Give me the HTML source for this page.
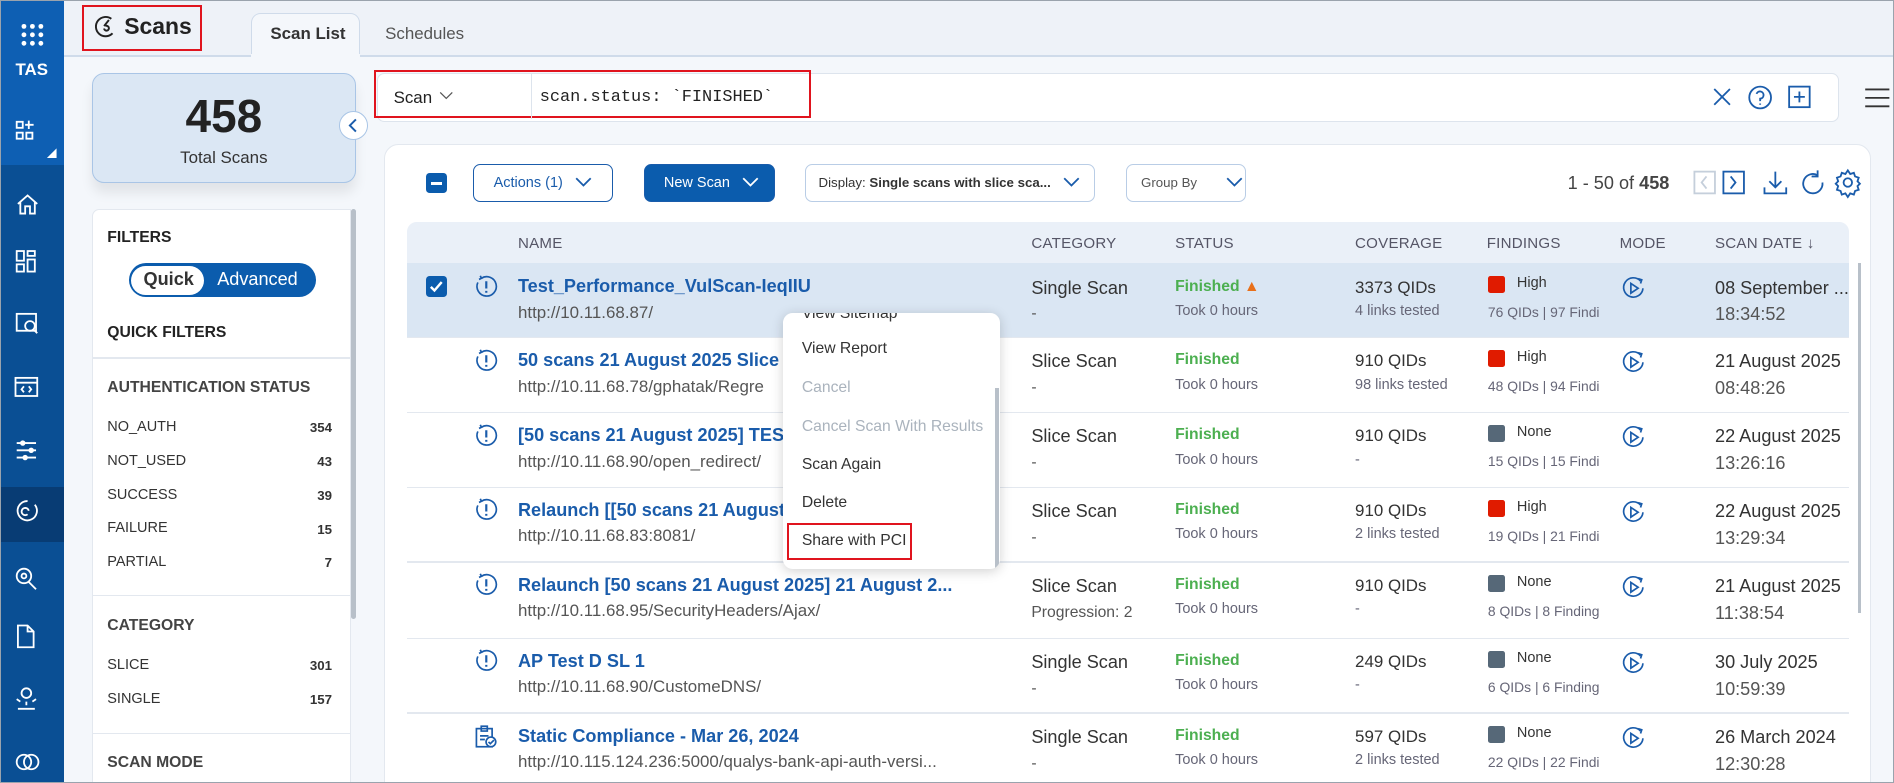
<!DOCTYPE html>
<html><head><meta charset="utf-8"><style>
*{box-sizing:border-box;margin:0;padding:0}
html,body{width:1894px;height:783px;overflow:hidden;background:#fff}
#r{zoom:1.2079;width:1568px;height:648px;position:relative;background:#eef2f8;font-family:"Liberation Sans",sans-serif;color:#333;overflow:hidden;border:1px solid #9aa3ad}
.a{position:absolute}
.sb{left:0;top:0;width:52px;height:648px;background:#0a4f94}
.t{white-space:nowrap}
.nm{color:#1a5cab;font-weight:bold;font-size:15px}
.url{color:#555;font-size:14px}
.cat{font-size:15px;color:#333}
.fin{color:#4caf50;font-weight:bold;font-size:13px}
.sm{font-size:12px;color:#667}
.hd{font-size:12.5px;color:#556;letter-spacing:.2px}
.sev{width:14px;height:14px;border-radius:2px}
.mi{left:16px;font-size:13px;color:#333}
.fl{font-size:12px;color:#333;left:13px}
.fn{font-size:11px;font-weight:bold;right:16px;color:#333}
.btn{border:1px solid #1a5cab;border-radius:6px;height:31px;top:135px;font-size:12px;color:#1a5cab;display:flex;align-items:center;padding-left:16px}
</style></head><body><div id="r">
<div class="a sb"></div>
<div class="a" style="left:0;top:0;width:52px;height:136px;background:#0e5fb3"></div>
<div class="a" style="left:0;top:402px;width:52px;height:46px;background:#083c74"></div>
<svg class="a" style="left:0;top:0" width="52" height="648" fill="none" stroke="#fff" stroke-width="1.5">
<g fill="#fff" stroke="none"><circle cx="19" cy="21" r="2"/><circle cx="26" cy="21" r="2"/><circle cx="33" cy="21" r="2"/><circle cx="19" cy="28" r="2"/><circle cx="26" cy="28" r="2"/><circle cx="33" cy="28" r="2"/><circle cx="19" cy="35" r="2"/><circle cx="26" cy="35" r="2"/><circle cx="33" cy="35" r="2"/><path d="M46 122L38 130H46Z"/></g>
<rect x="13" y="100" width="5" height="5"/><rect x="13" y="109" width="5" height="5"/><rect x="21" y="109" width="5" height="5"/><path d="M23 99v7M20 102.5h7"/>
<path d="M14 168l8-7 8 7M16 166v10h4v-6h4v6h4v-10"/>
<rect x="13" y="207" width="6" height="8"/><rect x="22" y="207" width="6" height="4"/><rect x="13" y="218" width="6" height="6"/><rect x="22" y="214" width="6" height="10"/>
<rect x="13" y="259" width="16" height="14"/><circle cx="24" cy="269" r="4"/><path d="M27 272l3 3"/>
<rect x="12" y="312" width="18" height="15"/><path d="M12 316h18M19 319l-2 2.5 2 2.5M23 319l2 2.5-2 2.5"/>
<path d="M13 366h16M13 372h16M13 378h16"/><circle cx="18" cy="366" r="1.5" fill="#fff"/><circle cx="25" cy="372" r="1.5" fill="#fff"/><circle cx="20" cy="378" r="1.5" fill="#fff"/>
<path d="M28 417a8 8 0 1 1-6-3M22 425a3 3 0 1 1 1-3"/>
<circle cx="19" cy="476" r="6"/><path d="M23 481l6 6"/><circle cx="19" cy="476" r="2"/>
<path d="M14 517h8l5 5v13H14Z M22 517v5h5"/>
<path d="M14 586h14M21 583v-3M17 573a4 4 0 0 1 8 0 4 4 0 0 1-8 0M16 580l-3-2M26 580l3-2"/>
<circle cx="19" cy="630" r="6"/><circle cx="25" cy="630" r="6"/>
</svg>
<div class="a t" style="left:12px;top:49px;color:#fff;font-weight:bold;font-size:14px">TAS</div>
<!-- header -->
<div class="a" style="left:67px;top:3px;width:99px;height:38px;border:2px solid #e0141e"></div>
<svg class="a" style="left:75px;top:11px" width="20" height="20" fill="none" stroke="#222" stroke-width="1.6"><path d="M16 4a8 8 0 1 0 1 12M10 12a2 2 0 1 0 1-2M10 10l4-5"/></svg>
<div class="a t" style="left:102px;top:10px;font-size:19px;font-weight:bold;color:#222">Scans</div>
<div class="a" style="left:207px;top:10px;width:90px;height:36px;background:#f4f7fb;border:1px solid #cfdbea;border-bottom:none;border-radius:8px 8px 0 0"></div>
<div class="a t" style="left:223px;top:19px;font-size:14px;font-weight:bold;color:#333">Scan List</div>
<div class="a t" style="left:318px;top:19px;font-size:14px;color:#555">Schedules</div>
<div class="a" style="left:52px;top:45px;width:1516px;height:1px;background:#cfdbea"></div>
<div class="a" style="left:52px;top:46px;width:1516px;height:602px;background:#f4f7fb"></div>
<div class="a" style="left:207px;top:44px;width:90px;height:3px;background:#f4f7fb"></div>
<!-- total card -->
<div class="a" style="left:75px;top:60px;width:219px;height:91px;background:#dbe7f4;border:1px solid #a9c5e6;border-radius:10px;box-shadow:0 8px 10px rgba(0,0,0,.08)"></div>
<div class="a t" style="left:75px;width:219px;text-align:center;top:73px;font-size:38px;font-weight:bold;color:#222">458</div>
<div class="a t" style="left:75px;width:219px;text-align:center;top:122px;font-size:14px;color:#333">Total Scans</div>
<div class="a" style="left:280px;top:91px;width:24px;height:24px;border-radius:50%;background:#fff;border:1px solid #a9c5e6"></div>
<svg class="a" style="left:280px;top:91px" width="24" height="24" fill="none" stroke="#1a5cab" stroke-width="1.6"><path d="M14 7l-5 5 5 5"/></svg>
<!-- filters -->
<div class="a" style="left:75px;top:172px;width:215px;height:476px;background:#fff;border:1px solid #e3e8ef;border-radius:6px 0 0 0"></div>
<div class="a" style="left:290px;top:172px;width:4px;height:340px;background:#b8c0c9;border-radius:2px"></div>
<div class="a t" style="left:88px;top:189px;font-size:13px;font-weight:bold;color:#222">FILTERS</div>
<div class="a" style="left:106px;top:217px;width:155px;height:28px;border-radius:14px;background:#0b5cad"></div>
<div class="a" style="left:108px;top:219px;width:60px;height:24px;border-radius:12px;background:#fff"></div>
<div class="a t" style="left:118px;top:222px;font-size:15px;font-weight:bold;color:#333">Quick</div>
<div class="a t" style="left:179px;top:222px;font-size:15px;color:#fff">Advanced</div>
<div class="a t" style="left:88px;top:267px;font-size:13px;font-weight:bold;color:#222">QUICK FILTERS</div>
<div class="a" style="left:76px;top:295px;width:214px;height:1px;background:#e3e8ef"></div>
<div class="a t" style="left:88px;top:313px;font-size:13px;font-weight:bold;color:#444">AUTHENTICATION STATUS</div>
<div style="position:absolute;left:75px;top:0;width:215px">
<div class="a t fl" style="top:346px">NO_AUTH</div><div class="a t fn" style="top:347px">354</div>
<div class="a t fl" style="top:374px">NOT_USED</div><div class="a t fn" style="top:375px">43</div>
<div class="a t fl" style="top:402px">SUCCESS</div><div class="a t fn" style="top:403px">39</div>
<div class="a t fl" style="top:430px">FAILURE</div><div class="a t fn" style="top:431px">15</div>
<div class="a t fl" style="top:458px">PARTIAL</div><div class="a t fn" style="top:459px">7</div>
<div class="a t fl" style="top:543px">SLICE</div><div class="a t fn" style="top:544px">301</div>
<div class="a t fl" style="top:571px">SINGLE</div><div class="a t fn" style="top:572px">157</div>
</div>
<div class="a" style="left:76px;top:492px;width:214px;height:1px;background:#e3e8ef"></div>
<div class="a t" style="left:88px;top:510px;font-size:13px;font-weight:bold;color:#444">CATEGORY</div>
<div class="a" style="left:76px;top:606px;width:214px;height:1px;background:#e3e8ef"></div>
<div class="a t" style="left:88px;top:623px;font-size:13px;font-weight:bold;color:#444">SCAN MODE</div>
<!-- search -->
<div class="a" style="left:311px;top:60px;width:1211px;height:40px;background:#fff;border:1px solid #dde4ed;border-radius:6px"></div>
<div class="a" style="left:309px;top:57px;width:362px;height:40px;border:2px solid #e0141e"></div>
<div class="a" style="left:439px;top:60px;width:1px;height:38px;background:#dde4ed"></div>
<div class="a t" style="left:325px;top:72px;font-size:14px;color:#222">Scan</div>
<svg class="a" style="left:363px;top:74px" width="12" height="10" fill="none" stroke="#555"><path d="M1 2l5 5 5-5"/></svg>
<div class="a t" style="left:446px;top:72px;font-size:14px;color:#222;font-family:'Liberation Mono',monospace">scan.status: `FINISHED`</div>
<svg class="a" style="left:1412px;top:68px" width="90" height="24" fill="none" stroke="#1a5cab" stroke-width="1.5"><path d="M6 5l13 13M19 5L6 18"/><circle cx="44" cy="12" r="9"/><path d="M41 9a3 3 0 1 1 3 4v2M44 17v1"/><rect x="68" y="3" width="17" height="17"/><path d="M76.5 7v9M72 11.5h9"/></svg>
<svg class="a" style="left:1542px;top:71px" width="22" height="18" stroke="#333" stroke-width="1.5"><path d="M1 2h20M1 9h20M1 16h20"/></svg>
<!-- main card -->
<div class="a" style="left:317px;top:118px;width:1231px;height:540px;background:#fff;border:1px solid #e3e8ef;border-radius:12px"></div>
<div class="a" style="left:352px;top:142px;width:17px;height:17px;border-radius:3px;background:#0b5cad"></div>
<div class="a" style="left:356px;top:150px;width:9px;height:2px;background:#fff"></div>
<div class="a btn" style="left:391px;width:116px">Actions (1)<svg style="margin-left:10px" width="14" height="9" fill="none" stroke="#1a5cab" stroke-width="1.5"><path d="M1 1l6 6 6-6"/></svg></div>
<div class="a btn" style="left:532px;width:109px;background:#0b5cad;color:#fff">New Scan<svg style="margin-left:10px" width="14" height="9" fill="none" stroke="#fff" stroke-width="1.5"><path d="M1 1l6 6 6-6"/></svg></div>
<div class="a btn" style="left:666px;width:240px;border-color:#b9cde6;color:#333;font-size:11px;padding-left:10px">Display:&nbsp;<b>Single scans with slice sca...</b><svg style="margin-left:10px" width="14" height="9" fill="none" stroke="#1a5cab" stroke-width="1.5"><path d="M1 1l6 6 6-6"/></svg></div>
<div class="a btn" style="left:931px;width:100px;border-color:#b9cde6;color:#555;font-size:11px;padding-left:12px">Group By<svg style="margin-left:24px" width="14" height="9" fill="none" stroke="#1a5cab" stroke-width="1.5"><path d="M1 1l6 6 6-6"/></svg></div>
<div class="a t" style="left:1297px;top:142px;font-size:15px;color:#444">1 - 50 of <b>458</b></div>
<svg class="a" style="left:1400px;top:138px" width="145" height="26" fill="none" stroke-width="1.5"><rect x="2" y="3" width="17" height="18" stroke="#c5cfdb"/><path d="M12 7l-4 5 4 5" stroke="#c5cfdb"/><rect x="26" y="3" width="17" height="18" stroke="#1a5cab"/><path d="M32 7l4 5-4 5" stroke="#1a5cab"/><g stroke="#1a5cab"><path d="M69 3v13M64 11l5 5 5-5M60 16v5h18v-5"/><path d="M104 6a8 8 0 1 0 4 6M104 2v5h-5"/><circle cx="129" cy="12" r="3.5"/><path d="M129 2l2 3 3-1 1 3 3 1-1 3 2 2-2 2 1 3-3 1-1 3-3-1-2 3-2-3-3 1-1-3-3-1 1-3-2-2 2-2-1-3 3-1 1-3 3 1z"/></g></svg>
<!-- table header -->
<div class="a" style="left:336px;top:183px;width:1194px;height:34px;background:#eaf0f8;border-radius:8px 8px 0 0"></div>
<div class="a t hd" style="left:428px;top:194px">NAME</div>
<div class="a t hd" style="left:853px;top:194px">CATEGORY</div>
<div class="a t hd" style="left:972px;top:194px">STATUS</div>
<div class="a t hd" style="left:1121px;top:194px">COVERAGE</div>
<div class="a t hd" style="left:1230px;top:194px">FINDINGS</div>
<div class="a t hd" style="left:1340px;top:194px">MODE</div>
<div class="a t hd" style="left:1419px;top:194px">SCAN DATE ↓</div>
<div class="a" style="left:336px;top:217px;width:1194px;height:61px;background:#dae6f3"></div>
<div class="a" style="left:1537px;top:217px;width:3px;height:290px;background:#b8c0c9"></div>
<div class="a" style="left:352px;top:228px;width:17px;height:17px;border-radius:3px;background:#0b5cad"></div>
<svg class="a" style="left:352px;top:228px" width="17" height="17" fill="none" stroke="#fff" stroke-width="2"><path d="M4 9l3 3 6-7"/></svg>
<div id="rows"></div>
<script>
var R=[
["Test_Performance_VulScan-IeqIIU","http://10.11.68.87/","Single Scan","-","⚠","3373 QIDs","4 links tested","#e01b00","High","76 QIDs | 97 Findi","08 September ...","18:34:52",1],
["50 scans 21 August 2025 Slice","http://10.11.68.78/gphatak/Regre","Slice Scan","-","","910 QIDs","98 links tested","#e01b00","High","48 QIDs | 94 Findi","21 August 2025","08:48:26",1],
["[50 scans 21 August 2025] TES","http://10.11.68.90/open_redirect/","Slice Scan","-","","910 QIDs","-","#566878","None","15 QIDs | 15 Findi","22 August 2025","13:26:16",1],
["Relaunch [[50 scans 21 August","http://10.11.68.83:8081/","Slice Scan","-","","910 QIDs","2 links tested","#e01b00","High","19 QIDs | 21 Findi","22 August 2025","13:29:34",1],
["Relaunch [50 scans 21 August 2025] 21 August 2...","http://10.11.68.95/SecurityHeaders/Ajax/","Slice Scan","Progression: 2","","910 QIDs","-","#566878","None","8 QIDs | 8 Finding","21 August 2025","11:38:54",1],
["AP Test D SL 1","http://10.11.68.90/CustomeDNS/","Single Scan","-","","249 QIDs","-","#566878","None","6 QIDs | 6 Finding","30 July 2025","10:59:39",1],
["Static Compliance - Mar 26, 2024","http://10.115.124.236:5000/qualys-bank-api-auth-versi...","Single Scan","-","","597 QIDs","2 links tested","#566878","None","22 QIDs | 22 Findi","26 March 2024","12:30:28",0]];
var tops=[217,278,340,402,464,527,589],h='';
R.forEach(function(r,i){var y=tops[i];
if(i>0)h+='<div class="a" style="left:336px;top:'+y+'px;width:1194px;height:1px;background:#e3e8ef"></div>';
h+=r[12]?'<svg class="a" style="left:391px;top:'+(y+9)+'px" width="22" height="22" fill="none" stroke="#1a5cab" stroke-width="1.4"><path d="M7 3.5A8 8 0 1 1 4 7"/><path d="M6 1.5l1 2-2 1"/><path d="M11 6v6M11 14v1.5" stroke-width="1.8"/></svg>':'<svg class="a" style="left:392px;top:'+(y+10)+'px" width="20" height="20" fill="none" stroke="#1a5cab" stroke-width="1.4"><rect x="2" y="3" width="13" height="15"/><path d="M6 1h5v4H6zM5 9h7M5 12h4"/><circle cx="14" cy="14" r="4" fill="#fff"/><path d="M12 14l1.5 1.5 3-3"/></svg>';
h+='<div class="a t nm" style="left:428px;top:'+(y+11)+'px">'+r[0]+'</div>';
h+='<div class="a t url" style="left:428px;top:'+(y+33)+'px">'+r[1]+'</div>';
h+='<div class="a t cat" style="left:853px;top:'+(y+12)+'px">'+r[2]+'</div>';
h+='<div class="a t sm" style="left:853px;top:'+(y+35)+'px;font-size:13px;color:#555">'+r[3]+'</div>';
h+='<div class="a t fin" style="left:972px;top:'+(y+12)+'px">Finished'+(r[4]?' <span style="color:#e8701a">▲</span>':'')+'</div>';
h+='<div class="a t sm" style="left:972px;top:'+(y+33)+'px">Took 0 hours</div>';
h+='<div class="a t cat" style="left:1121px;top:'+(y+12)+'px;font-size:14px">'+r[5]+'</div>';
h+='<div class="a t sm" style="left:1121px;top:'+(y+33)+'px">'+r[6]+'</div>';
h+='<div class="a sev" style="left:1231px;top:'+(y+11)+'px;background:'+r[7]+'"></div>';
h+='<div class="a t" style="left:1255px;top:'+(y+10)+'px;font-size:12px;color:#333">'+r[8]+'</div>';
h+='<div class="a t sm" style="left:1231px;top:'+(y+34)+'px;width:94px;overflow:hidden;font-size:11.5px">'+r[9]+'</div>';
h+='<svg class="a" style="left:1340px;top:'+(y+10)+'px" width="22" height="22" fill="none" stroke="#1a5cab" stroke-width="1.4"><path d="M17 5A8 8 0 1 0 19 11"/><path d="M15 3l3 1-1 3" /><path d="M9 7v8l6-4z"/></svg>';
h+='<div class="a t cat" style="left:1419px;top:'+(y+12)+'px">'+r[10]+'</div>';
h+='<div class="a t cat" style="left:1419px;top:'+(y+34)+'px;color:#555">'+r[11]+'</div>';
});
document.getElementById('rows').innerHTML=h;
</script>
<!-- context menu -->
<div class="a" style="left:647px;top:258px;width:180px;height:212px;background:#fff;border-radius:8px;box-shadow:0 2px 10px rgba(0,0,0,.18);overflow:hidden">
<div class="a t mi" style="top:-6px">View Sitemap</div>
<div class="a t mi" style="top:23px">View Report</div>
<div class="a t mi" style="top:55px;color:#aab3bd">Cancel</div>
<div class="a t mi" style="top:87px;color:#aab3bd">Cancel Scan With Results</div>
<div class="a t mi" style="top:119px">Scan Again</div>
<div class="a t mi" style="top:150px">Delete</div>
<div class="a t mi" style="top:182px">Share with PCI</div>
<div class="a" style="left:4px;top:174px;width:103px;height:31px;border:2px solid #e0141e"></div>
<div class="a" style="left:176px;top:62px;width:3px;height:150px;background:#b8c0c9"></div>
</div>
</div></body></html>
